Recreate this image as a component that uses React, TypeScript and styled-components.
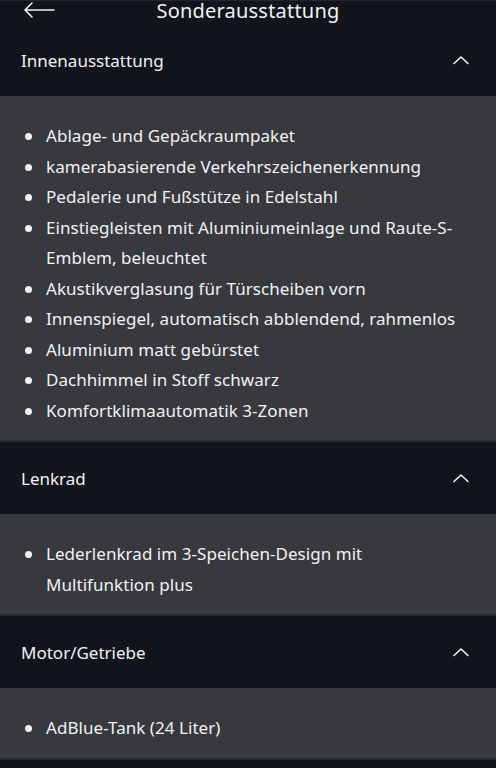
import * as React from 'react';
import styled, { createGlobalStyle } from 'styled-components';

const GlobalStyle = createGlobalStyle`
  html, body {
    margin: 0;
    padding: 0;
    background: #11141b;
  }
  body {
    font-family: "Noto Sans", "Open Sans", sans-serif;
    color: #f2f2f4;
  }
`;

const Page = styled.div`
  width: 496px;
  min-height: 768px;
  background: #11141b;
`;

const TopBar = styled.div`
  height: 24px;
  display: flex;
  align-items: flex-start;
  justify-content: center;
  position: relative;
  border-top: 1px solid #23262e;
  box-sizing: border-box;
`;

const BackButton = styled.div`
  position: absolute;
  left: 23px;
  top: 0;
  width: 32px;
  height: 18px;
  display: flex;
  align-items: center;
`;

const Title = styled.h1`
  margin: 0;
  font-size: 20px;
  font-weight: 400;
  letter-spacing: 0.2px;
  line-height: 20px;
`;

const SectionHeader = styled.div<{ $height: number }>`
  height: ${p => p.$height}px;
  display: flex;
  align-items: center;
  justify-content: space-between;
  padding: 0 26px 0 21px;
  box-sizing: border-box;
`;

const SectionTitle = styled.span`
  font-size: 17px;
  font-weight: 400;
  margin-top: 1px;
`;

const Content = styled.div`
  background: #38383f;
  padding: 25px 0 14px;
  border-bottom: 2px solid #2a2b31;
`;

const List = styled.ul`
  margin: 0;
  padding: 0 28px 0 46px;
  list-style: none;
`;

const Item = styled.li`
  position: relative;
  font-size: 17px;
  line-height: 30.5px;
  letter-spacing: 0.05px;

  &::before {
    content: '';
    position: absolute;
    left: -21px;
    top: 12px;
    width: 7px;
    height: 7px;
    border-radius: 50%;
    background: #f2f2f4;
  }
`;

const Arrow = () => (
  <svg width="32" height="18" viewBox="0 0 32 18" fill="none">
    <path d="M31 9H2M9 2L2 9l7 7" stroke="#f2f2f4" strokeWidth="1.6" strokeLinecap="round" strokeLinejoin="round" />
  </svg>
);

const Chevron = () => (
  <svg width="18" height="10" viewBox="0 0 18 10" fill="none">
    <path d="M2 8.5L9 2l7 6.5" stroke="#f2f2f4" strokeWidth="1.6" strokeLinecap="round" strokeLinejoin="round" />
  </svg>
);

const sections = [
  {
    title: 'Innenausstattung',
    height: 72,
    items: [
      'Ablage- und Gepäckraumpaket',
      'kamerabasierende Verkehrszeichenerkennung',
      'Pedalerie und Fußstütze in Edelstahl',
      'Einstiegleisten mit Aluminiumeinlage und Raute-S-Emblem, beleuchtet',
      'Akustikverglasung für Türscheiben vorn',
      'Innenspiegel, automatisch abblendend, rahmenlos',
      'Aluminium matt gebürstet',
      'Dachhimmel in Stoff schwarz',
      'Komfortklimaautomatik 3-Zonen',
    ],
  },
  {
    title: 'Lenkrad',
    height: 72,
    items: ['Lederlenkrad im 3-Speichen-Design mit Multifunktion plus'],
  },
  {
    title: 'Motor/Getriebe',
    height: 72,
    items: ['AdBlue-Tank (24 Liter)'],
  },
];

export default function App() {
  return (
    <>
      <GlobalStyle />
      <Page>
        <TopBar>
          <BackButton>
            <Arrow />
          </BackButton>
          <Title>Sonderausstattung</Title>
        </TopBar>
        {sections.map(s => (
          <React.Fragment key={s.title}>
            <SectionHeader $height={s.height}>
              <SectionTitle>{s.title}</SectionTitle>
              <Chevron />
            </SectionHeader>
            <Content>
              <List>
                {s.items.map(i => (
                  <Item key={i}>{i}</Item>
                ))}
              </List>
            </Content>
          </React.Fragment>
        ))}
      </Page>
    </>
  );
}
